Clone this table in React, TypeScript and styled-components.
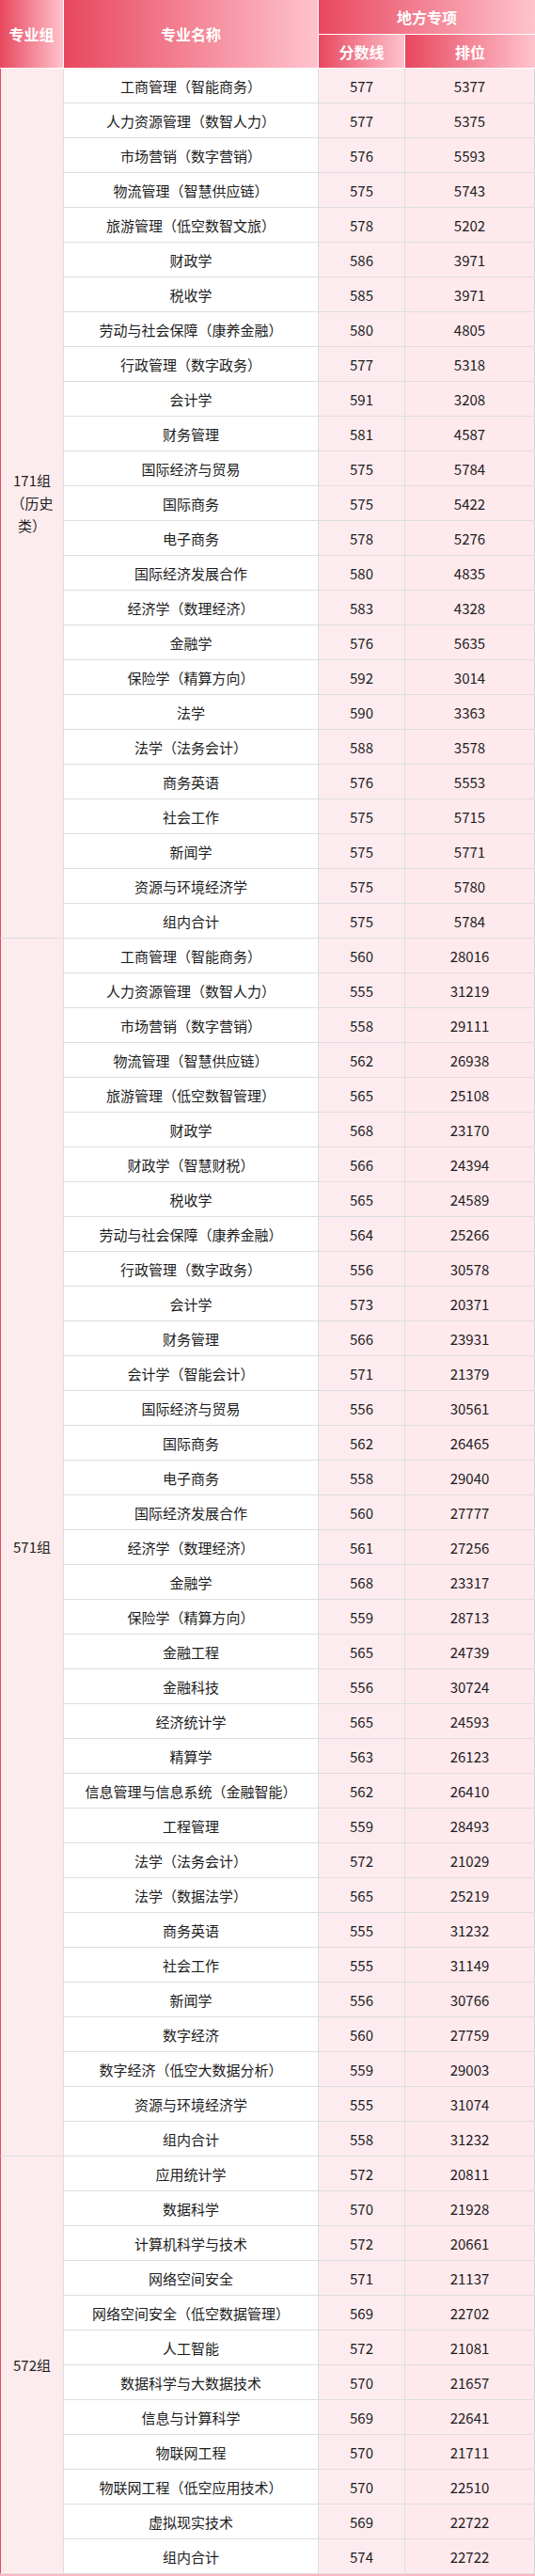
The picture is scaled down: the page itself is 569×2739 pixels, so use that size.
import styled, { createGlobalStyle } from 'styled-components';

const GlobalStyle = createGlobalStyle`
  html, body {
    margin: 0;
    padding: 0;
    background: #ffffff;
  }
  body {
    font-family: "Noto Sans CJK SC", "Noto Sans", sans-serif;
    color: #1c1c1c;
  }
`;

type Row = [string, string, string];

interface Group {
  label: string;
  rows: Row[];
}

const groups: Group[] = [
  {
    label: '171组（历史类）',
    rows: [
      ['工商管理（智能商务）', '577', '5377'],
      ['人力资源管理（数智人力）', '577', '5375'],
      ['市场营销（数字营销）', '576', '5593'],
      ['物流管理（智慧供应链）', '575', '5743'],
      ['旅游管理（低空数智文旅）', '578', '5202'],
      ['财政学', '586', '3971'],
      ['税收学', '585', '3971'],
      ['劳动与社会保障（康养金融）', '580', '4805'],
      ['行政管理（数字政务）', '577', '5318'],
      ['会计学', '591', '3208'],
      ['财务管理', '581', '4587'],
      ['国际经济与贸易', '575', '5784'],
      ['国际商务', '575', '5422'],
      ['电子商务', '578', '5276'],
      ['国际经济发展合作', '580', '4835'],
      ['经济学（数理经济）', '583', '4328'],
      ['金融学', '576', '5635'],
      ['保险学（精算方向）', '592', '3014'],
      ['法学', '590', '3363'],
      ['法学（法务会计）', '588', '3578'],
      ['商务英语', '576', '5553'],
      ['社会工作', '575', '5715'],
      ['新闻学', '575', '5771'],
      ['资源与环境经济学', '575', '5780'],
      ['组内合计', '575', '5784'],
    ],
  },
  {
    label: '571组',
    rows: [
      ['工商管理（智能商务）', '560', '28016'],
      ['人力资源管理（数智人力）', '555', '31219'],
      ['市场营销（数字营销）', '558', '29111'],
      ['物流管理（智慧供应链）', '562', '26938'],
      ['旅游管理（低空数智管理）', '565', '25108'],
      ['财政学', '568', '23170'],
      ['财政学（智慧财税）', '566', '24394'],
      ['税收学', '565', '24589'],
      ['劳动与社会保障（康养金融）', '564', '25266'],
      ['行政管理（数字政务）', '556', '30578'],
      ['会计学', '573', '20371'],
      ['财务管理', '566', '23931'],
      ['会计学（智能会计）', '571', '21379'],
      ['国际经济与贸易', '556', '30561'],
      ['国际商务', '562', '26465'],
      ['电子商务', '558', '29040'],
      ['国际经济发展合作', '560', '27777'],
      ['经济学（数理经济）', '561', '27256'],
      ['金融学', '568', '23317'],
      ['保险学（精算方向）', '559', '28713'],
      ['金融工程', '565', '24739'],
      ['金融科技', '556', '30724'],
      ['经济统计学', '565', '24593'],
      ['精算学', '563', '26123'],
      ['信息管理与信息系统（金融智能）', '562', '26410'],
      ['工程管理', '559', '28493'],
      ['法学（法务会计）', '572', '21029'],
      ['法学（数据法学）', '565', '25219'],
      ['商务英语', '555', '31232'],
      ['社会工作', '555', '31149'],
      ['新闻学', '556', '30766'],
      ['数字经济', '560', '27759'],
      ['数字经济（低空大数据分析）', '559', '29003'],
      ['资源与环境经济学', '555', '31074'],
      ['组内合计', '558', '31232'],
    ],
  },
  {
    label: '572组',
    rows: [
      ['应用统计学', '572', '20811'],
      ['数据科学', '570', '21928'],
      ['计算机科学与技术', '572', '20661'],
      ['网络空间安全', '571', '21137'],
      ['网络空间安全（低空数据管理）', '569', '22702'],
      ['人工智能', '572', '21081'],
      ['数据科学与大数据技术', '570', '21657'],
      ['信息与计算科学', '569', '22641'],
      ['物联网工程', '570', '21711'],
      ['物联网工程（低空应用技术）', '570', '22510'],
      ['虚拟现实技术', '569', '22722'],
      ['组内合计', '574', '22722'],
    ],
  },
];

const Table = styled.table`
  width: 569px;
  table-layout: fixed;
  border-collapse: separate;
  border-spacing: 0;
  border-bottom: 2px solid #ffb7c4;
`;

const HeadCell = styled.th<{ $height: number }>`
  box-sizing: border-box;
  height: ${({ $height }) => $height}px;
  padding: 0;
  background: linear-gradient(90deg, #e8475e 0%, #ffc3ce 100%);
  color: #ffffff;
  font-size: 16px;
  font-weight: 700;
  text-align: center;
  vertical-align: middle;
  border-right: 1px solid #ffffff;
  border-bottom: 1px solid #ffffff;

  &:last-child {
    border-right: none;
  }
`;

const Cell = styled.td`
  box-sizing: border-box;
  height: 37px;
  padding: 0;
  font-size: 15px;
  text-align: center;
  vertical-align: middle;
  border-bottom: 1px solid #dedede;
  border-right: 1px solid #dedede;
  white-space: nowrap;
`;

const GroupCell = styled(Cell)`
  padding: 0 8px;
  background: #fdecee;
  border-left: 1px solid #e8475e;
  line-height: 24px;
  white-space: normal;
`;

const NameCell = styled(Cell)`
  background: #ffffff;
`;

const NumCell = styled(Cell)<{ $last?: boolean }>`
  background: ${({ $last }) => ($last ? '#fee9ed' : '#fdecef')};
  border-right-color: ${({ $last }) => ($last ? '#d2d2d2' : '#dedede')};
`;

export default function App() {
  return (
    <>
      <GlobalStyle />
      <Table>
        <colgroup>
          <col style={{ width: 68 }} />
          <col style={{ width: 271 }} />
          <col style={{ width: 92 }} />
          <col style={{ width: 138 }} />
        </colgroup>
        <thead>
          <tr>
            <HeadCell $height={37} rowSpan={2}>专业组</HeadCell>
            <HeadCell $height={37} rowSpan={2}>专业名称</HeadCell>
            <HeadCell $height={37} colSpan={2}>地方专项</HeadCell>
          </tr>
          <tr>
            <HeadCell $height={36}>分数线</HeadCell>
            <HeadCell $height={36}>排位</HeadCell>
          </tr>
        </thead>
        <tbody>
          {groups.map((group) =>
            group.rows.map(([name, score, rank], i) => (
              <tr key={group.label + name}>
                {i === 0 && (
                  <GroupCell rowSpan={group.rows.length}>{group.label}</GroupCell>
                )}
                <NameCell>{name}</NameCell>
                <NumCell>{score}</NumCell>
                <NumCell $last>{rank}</NumCell>
              </tr>
            ))
          )}
        </tbody>
      </Table>
    </>
  );
}
